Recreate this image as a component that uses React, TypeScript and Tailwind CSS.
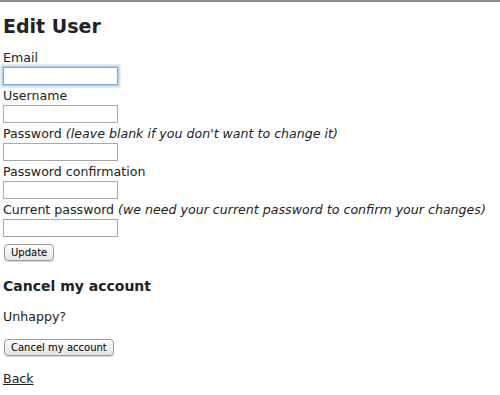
const labelCls = "block h-[17px] leading-[17px] text-[12.6px] text-[#222] whitespace-nowrap";
const inputCls = "block w-[115px] h-[18px] mt-px mb-[2px] border border-[#a9a9a9] bg-white";

function Field({ label, hint, focused }: { label: string; hint?: string; focused?: boolean }) {
  return (
    <div>
      <label className={labelCls}>
        {label}
        {hint && <em className="italic"> ({hint})</em>}
      </label>
      <input
        type="text"
        className={
          focused
            ? "block w-[115px] h-[18px] mt-px mb-[2px] border border-[#7aa6d6] bg-white shadow-[0_0_2px_2px_#b4d0f0] outline-none"
            : inputCls
        }
      />
    </div>
  );
}

function MacButton({ children }: { children: React.ReactNode }) {
  return (
    <button className="h-[17px] px-[6px] rounded-[4px] border border-[#9a9a9a] bg-gradient-to-b from-white to-[#e4e4e4] text-[10px] leading-[15px] text-black shadow-[0_1px_0_#d8d8d8]">
      {children}
    </button>
  );
}

export default function App() {
  return (
    <div className="min-h-[395px] bg-white border-t-2 border-[#8a8a8a] px-[3px] pt-[13px] font-['DejaVu_Sans',Verdana,sans-serif] text-[#222]">
      <h1 className="text-[19px] font-bold leading-[22px] mb-[12px] text-[#222]">Edit User</h1>

      <form onSubmit={(e) => e.preventDefault()}>
        <Field label="Email" focused />
        <Field label="Username" />
        <Field label="Password" hint="leave blank if you don't want to change it" />
        <Field label="Password confirmation" />
        <Field label="Current password" hint="we need your current password to confirm your changes" />
        <div className="ml-px">
          <MacButton>Update</MacButton>
        </div>
      </form>

      <h3 className="mt-[15px] text-[14px] font-bold leading-[17px] text-[#222]">Cancel my account</h3>
      <p className="mt-[13px] text-[12.6px] leading-[17px]">Unhappy?</p>
      <div className="mt-[9px] ml-px">
        <MacButton>Cancel my account</MacButton>
      </div>
      <a href="#" className="block mt-[12px] text-[12.6px] leading-[17px] text-[#222] underline w-fit">
        Back
      </a>
    </div>
  );
}
